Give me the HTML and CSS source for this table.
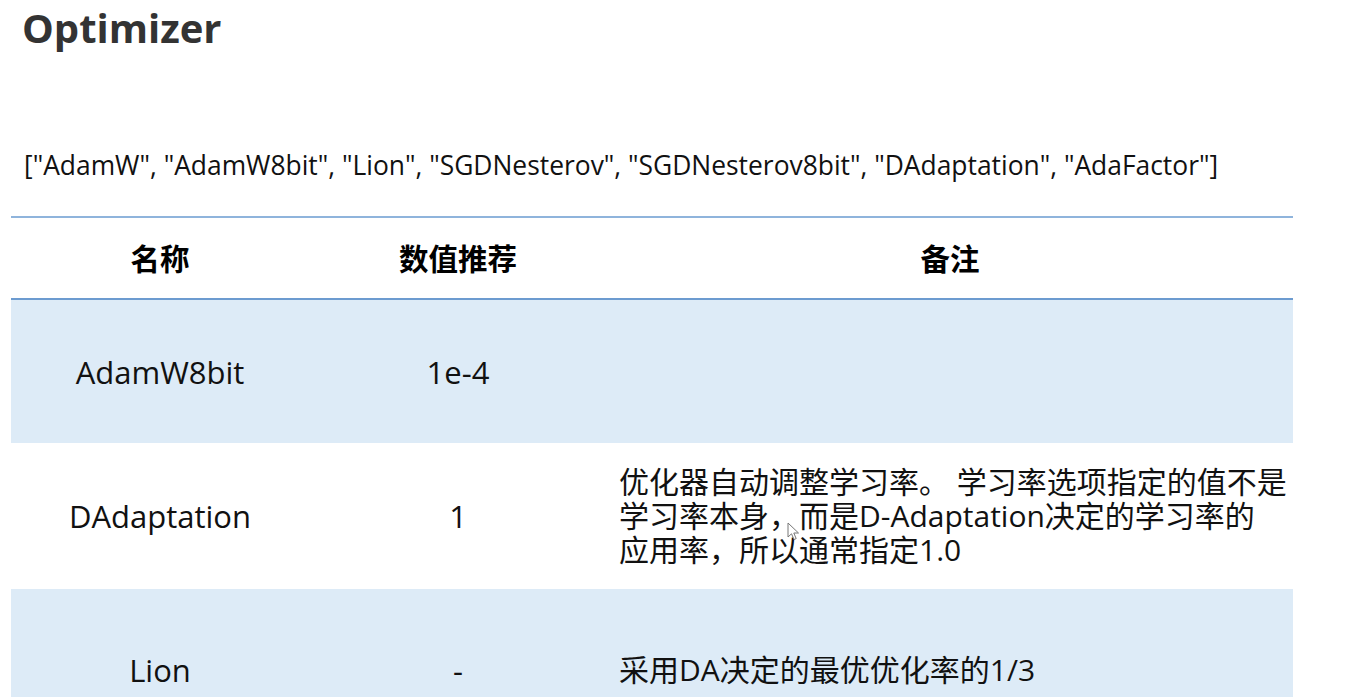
FILE: index.html
```html
<!DOCTYPE html>
<html lang="zh-CN">
<head>
<meta charset="utf-8">
<title>Optimizer</title>
<link rel="stylesheet" href="styles.css">
</head>
<body>
<div class="page">
  <h1 class="title">Optimizer</h1>
  <p class="list">["AdamW", "AdamW8bit", "Lion", "SGDNesterov", "SGDNesterov8bit", "DAdaptation", "AdaFactor"]</p>
  <table class="opt-table">
    <colgroup>
      <col class="c-name">
      <col class="c-val">
      <col class="c-note">
    </colgroup>
    <thead>
      <tr><th>名称</th><th>数值推荐</th><th>备注</th></tr>
    </thead>
    <tbody>
      <tr class="r1 shade"><td>AdamW8bit</td><td>1e-4</td><td class="note"></td></tr>
      <tr class="r2"><td>DAdaptation</td><td>1</td><td class="note">优化器自动调整学习率。 学习率选项指定的值不是<br>学习率本身，而是D-Adaptation决定的学习率的<br>应用率，所以通常指定1.0</td></tr>
      <tr class="r3 shade"><td>Lion</td><td>-</td><td class="note">采用DA决定的最优优化率的1/3</td></tr>
    </tbody>
  </table>
</div>
<svg class="cursor" width="14" height="20" viewBox="0 0 14 20" aria-hidden="true">
  <path d="M1 1 L1 15 L4.5 11.8 L7 17.5 L9.2 16.6 L6.8 11 L11.5 11 Z" fill="#ffffff" stroke="#777" stroke-width="1" stroke-linejoin="round"/>
</svg>
</body>
</html>
```
FILE: styles.css
```css
html, body {
  margin: 0;
  padding: 0;
  background: #ffffff;
}
body {
  font-family: "Open Sans", "Noto Sans CJK SC", sans-serif;
  color: #111;
  overflow: hidden;
  position: relative;
  height: 697px;
}
.page {
  padding: 0 0 0 11px;
  width: 1282px;
}
.title {
  margin: 0;
  padding: 4px 0 0 11px;
  font-size: 40px;
  font-weight: 700;
  line-height: 48px;
  color: #333;
}
.list {
  margin: 97px 0 0 13px;
  font-size: 26.4px;
  line-height: 32px;
  color: #111;
}
.opt-table {
  margin-top: 35px;
  width: 1282px;
  border-collapse: collapse;
  table-layout: fixed;
  font-size: 31px;
}
.c-name { width: 298px; }
.c-val { width: 298px; }
.c-note { width: 686px; }
.opt-table thead tr {
  border-top: 2px solid #8fb4dc;
  border-bottom: 2px solid #6c9bd0;
}
.opt-table th {
  height: 78px;
  font-size: 29.5px;
  font-weight: 700;
  text-align: center;
  vertical-align: middle;
  padding: 0 0 2px;
  color: #000;
}
.opt-table td {
  text-align: center;
  vertical-align: middle;
  padding: 0;
  line-height: 34px;
}
.opt-table td.note {
  text-align: left;
  padding: 0 0 0 12px;
  font-size: 30px;
  white-space: nowrap;
}
.shade { background: #ddebf7; }
.r1 td { height: 143px; }
.r2 td { height: 146px; }
.r3 td { height: 162px; }
.cursor {
  position: absolute;
  left: 787px;
  top: 522px;
}
```
